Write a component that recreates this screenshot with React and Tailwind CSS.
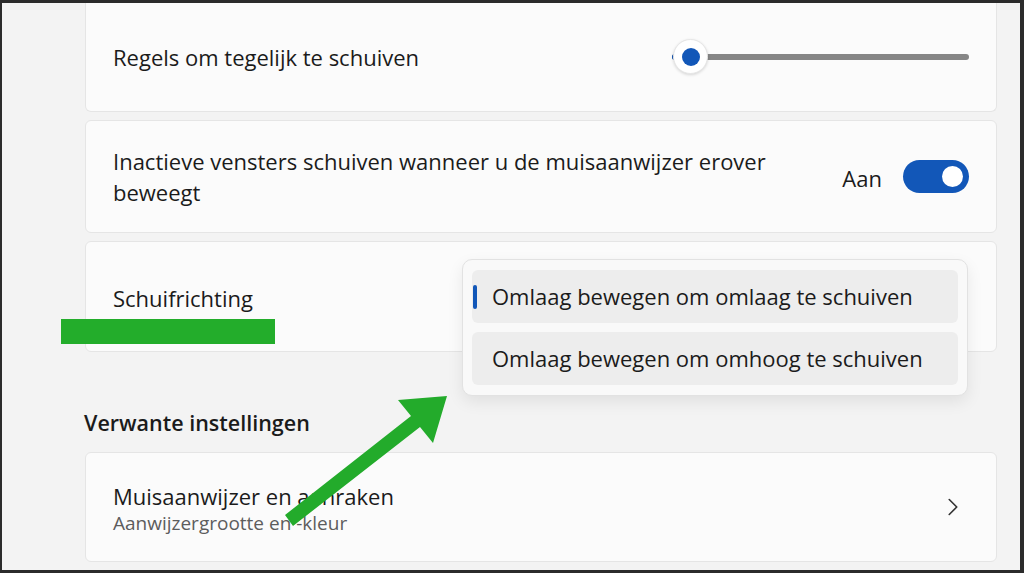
import { ChevronRight } from 'lucide-react'

const card = 'bg-[#fbfbfb] border border-[#e5e5e5] rounded-md'

function Slider() {
  return (
    <div className="relative w-[297px] h-[36px] flex items-center">
      <div className="w-full h-[6px] rounded-full bg-[#868686]" />
      <div className="absolute left-0 w-[20px] h-[6px] rounded-full bg-[#1257b8]" />
      <div className="absolute left-[1px] w-[35px] h-[35px] rounded-full bg-white border border-[#e6e6e6] shadow-[0_1px_3px_rgba(0,0,0,0.15)] flex items-center justify-center">
        <div className="w-[18px] h-[18px] rounded-full bg-[#1257b8]" />
      </div>
    </div>
  )
}

function Toggle() {
  return (
    <div className="w-[66px] h-[33px] rounded-full bg-[#1257b8] flex items-center justify-end pr-[6px]">
      <div className="w-[21px] h-[21px] rounded-full bg-white" />
    </div>
  )
}

export default function App() {
  return (
    <div className="relative w-[1024px] h-[573px] bg-[#2b2b2b] pt-[3px] pl-[2px] pr-[4px] pb-[3px] overflow-hidden font-['Open_Sans',sans-serif] text-[#1b1b1b]">
      <div className="h-full bg-[#f3f3f3] pl-[83px] flex flex-col">
        {/* cards */}
        <div className="w-[912px] h-[109px] bg-[#fbfbfb] border-x border-b border-[#e5e5e5] rounded-b-md flex items-center justify-between pl-[27px] pr-[27px] pb-[1px]">
          <span className="text-[22px] leading-[30px] pt-[1px]">Regels om tegelijk te schuiven</span>
          <Slider />
        </div>

        <div className={`${card} w-[912px] h-[113px] mt-[8px] flex items-center justify-between pl-[27px] pr-[27px]`}>
          <span className="text-[22px] leading-[31px] w-[690px]">
            Inactieve vensters schuiven wanneer u de muisaanwijzer erover beweegt
          </span>
          <div className="flex items-center gap-[21px]">
            <span className="text-[22px] pt-[3px]">Aan</span>
            <Toggle />
          </div>
        </div>

        <div className={`${card} relative w-[912px] h-[111px] mt-[8px] flex items-center pl-[27px]`}>
          <span className="text-[22px] pt-[4px]">Schuifrichting</span>

          {/* open dropdown menu */}
          <div className="absolute left-[376px] top-[17px] w-[506px] h-[137px] rounded-[10px] border border-[#e2e2e2] bg-[#f9f9f9] shadow-[0_6px_16px_rgba(0,0,0,0.08)] px-[9px] pt-[10px] flex flex-col gap-[9px] z-10">
            <div className="relative h-[53px] rounded-md bg-[#ededed] flex items-center pl-[20px]">
              <div className="absolute left-[1px] w-[4px] h-[24px] rounded-full bg-[#1257b8]" />
              <span className="text-[22px]">Omlaag bewegen om omlaag te schuiven</span>
            </div>
            <div className="h-[53px] rounded-md bg-[#ededed] flex items-center pl-[20px]">
              <span className="text-[22px]">Omlaag bewegen om omhoog te schuiven</span>
            </div>
          </div>
        </div>

        <div className="mt-[57px] text-[21.5px] font-semibold leading-[28px] -ml-[1px]">Verwante instellingen</div>

        <div className={`${card} w-[912px] h-[110px] mt-[15px] flex items-center justify-between pl-[27px] pr-[28px]`}>
          <div className="flex flex-col pt-[4px]">
            <span className="text-[22px] leading-[28px]">Muisaanwijzer en aanraken</span>
            <span className="text-[19px] leading-[27px] text-[#5d5d5d]">Aanwijzergrootte en -kleur</span>
          </div>
          <ChevronRight size={30} strokeWidth={1.3} className="text-[#333]" />
        </div>
      </div>

      {/* annotation overlays */}
      <div className="absolute left-[61px] top-[319px] w-[214px] h-[25px] bg-[#23ad2b]" />
      <svg className="absolute left-0 top-0 pointer-events-none" width="1024" height="573" viewBox="0 0 1024 573">
        <polygon
          points="285,515 411,416 398,400 447,396 433,443 420,427 293,526"
          fill="#23ab2b"
        />
      </svg>
    </div>
  )
}
